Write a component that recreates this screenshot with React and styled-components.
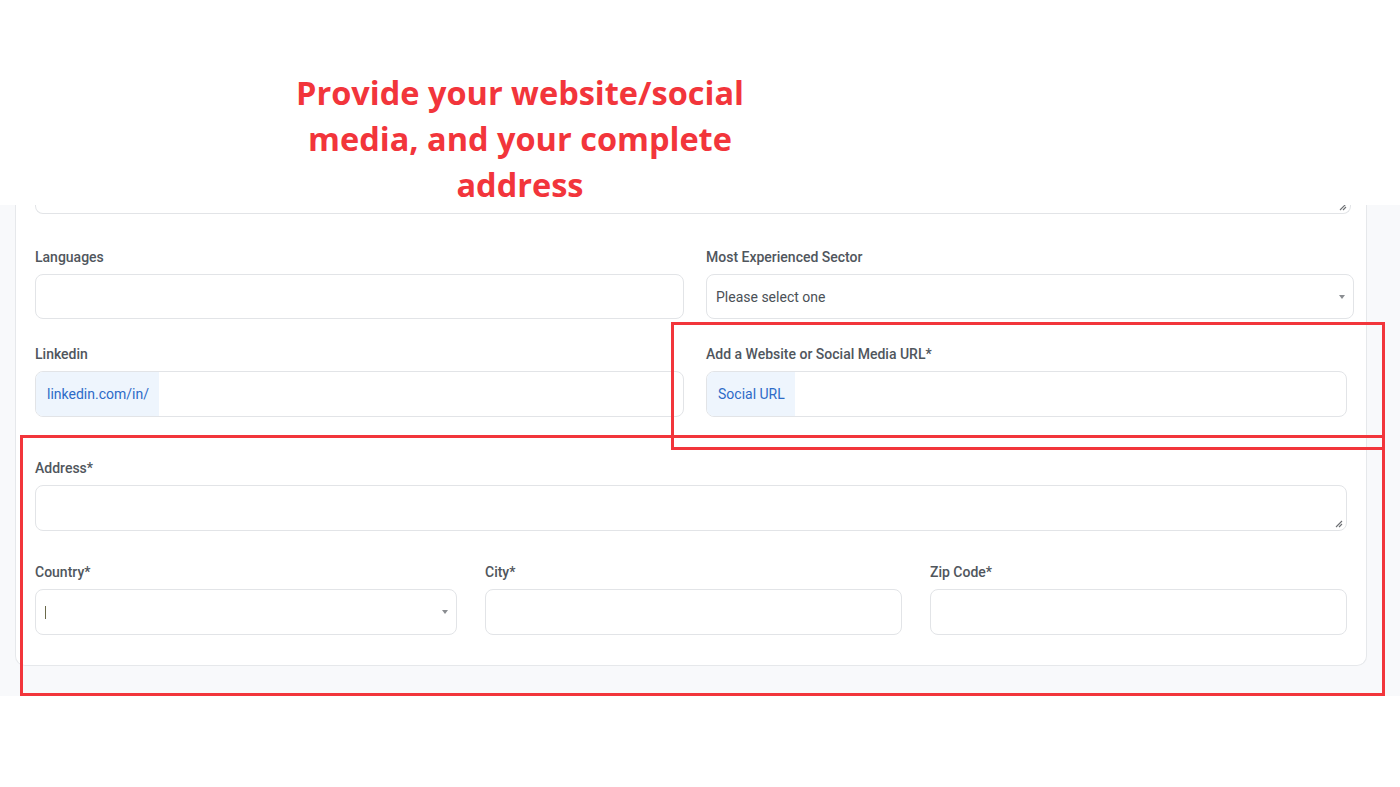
import React from "react";
import styled, { createGlobalStyle } from "styled-components";

const Global = createGlobalStyle`
  html, body { margin: 0; padding: 0; background: #ffffff; }
  body { font-family: Roboto, "Liberation Sans", Arial, sans-serif; }
  * { box-sizing: border-box; }
`;

const Page = styled.div`
  position: relative;
  width: 1400px;
  height: 787px;
  background: #ffffff;
  overflow: hidden;
`;

const Header = styled.header`
  height: 205px;
  display: flex;
  align-items: flex-start;
  padding: 70px 0 0 220px;
`;

const Title = styled.h1`
  margin: 0;
  width: 600px;
  text-align: center;
  font-family: "Open Sans", Lato, sans-serif;
  font-weight: 700;
  font-size: 32.5px;
  line-height: 46px;
  color: #f2353b;
  letter-spacing: 0;
`;

const Shot = styled.section`
  height: 491px;
  background: #f8f9fb;
  padding: 0 33px 0 15px;
  overflow: hidden;
`;

const Card = styled.div`
  background: #ffffff;
  border: 1px solid #e6e8eb;
  border-top: none;
  border-radius: 0 0 10px 10px;
  padding: 0 19px 30px 19px;
`;

const CutArea = styled.div`
  position: relative;
  height: 9px;
  margin-right: -4px;
  border: 1px solid #e2e4e7;
  border-top: none;
  border-radius: 0 0 8px 8px;
`;

const Grip = styled.svg`
  position: absolute;
  right: 3px;
  bottom: 2px;
`;

const Row = styled.div`
  display: grid;
  grid-template-columns: ${(p) => p.$cols};
  column-gap: ${(p) => p.$gap || "22px"};
  margin-top: ${(p) => p.$top};
  margin-right: ${(p) => p.$extend || "0"};
`;

const Field = styled.div`
  display: flex;
  flex-direction: column;
  min-width: 0;
`;

const Label = styled.label`
  font-size: 14px;
  font-weight: 500;
  color: #50565d;
  line-height: 17px;
  margin-bottom: 8px;
`;

const Box = styled.div`
  position: relative;
  display: flex;
  align-items: stretch;
  height: ${(p) => p.$h || "45px"};
  border: 1px solid #e2e4e7;
  border-radius: 8px;
  background: #ffffff;
  overflow: hidden;
`;

const Addon = styled.span`
  display: flex;
  align-items: center;
  padding: 0 10px 0 11px;
  background: #eef5fd;
  color: #2d6bc8;
  font-size: 14px;
  font-weight: 400;
`;

const Value = styled.span`
  display: flex;
  align-items: center;
  padding: 0 9px;
  font-size: 14px;
  color: #4b5157;
`;

const Caret = styled.span`
  align-self: center;
  margin-left: 9px;
  width: 1px;
  height: 13px;
  background: #6b6a4a;
`;

const Arrow = styled.span`
  position: absolute;
  right: 8px;
  top: 50%;
  margin-top: -2px;
  width: 0;
  height: 0;
  border-left: 3.5px solid transparent;
  border-right: 3.5px solid transparent;
  border-top: 4px solid #8a8d91;
`;

const Mark = styled.div`
  position: absolute;
  border: 3.5px solid #f2353b;
  pointer-events: none;
`;

const ResizeGrip = () => (
  <Grip width="8" height="8" viewBox="0 0 8 8">
    <path d="M7 1 L1 7 M7 4 L4 7" stroke="#6c6f73" strokeWidth="1.1" fill="none" />
  </Grip>
);

export default function App() {
  return (
    <Page>
      <Global />
      <Header>
        <Title>
          Provide your website/social
          <br />
          media, and your complete
          <br />
          address
        </Title>
      </Header>
      <Shot>
        <Card>
          <CutArea>
            <ResizeGrip />
          </CutArea>

          <Row $cols="649px 1fr" $top="35px" $extend="-7px">
            <Field>
              <Label>Languages</Label>
              <Box $h="45px" />
            </Field>
            <Field>
              <Label>Most Experienced Sector</Label>
              <Box $h="45px">
                <Value>Please select one</Value>
                <Arrow />
              </Box>
            </Field>
          </Row>

          <Row $cols="649px 1fr" $top="27px">
            <Field>
              <Label>Linkedin</Label>
              <Box $h="46px">
                <Addon>linkedin.com/in/</Addon>
              </Box>
            </Field>
            <Field>
              <Label>Add a Website or Social Media URL*</Label>
              <Box $h="46px">
                <Addon>Social URL</Addon>
              </Box>
            </Field>
          </Row>

          <Row $cols="1fr" $top="43px">
            <Field>
              <Label>Address*</Label>
              <Box $h="46px">
                <ResizeGrip />
              </Box>
            </Field>
          </Row>

          <Row $cols="422px 1fr 1fr" $gap="28px" $top="33px">
            <Field>
              <Label>Country*</Label>
              <Box $h="46px">
                <Caret />
                <Arrow />
              </Box>
            </Field>
            <Field>
              <Label>City*</Label>
              <Box $h="46px" />
            </Field>
            <Field>
              <Label>Zip Code*</Label>
              <Box $h="46px" />
            </Field>
          </Row>
        </Card>
      </Shot>

      <Mark style={{ left: 671, top: 322, width: 714, height: 128 }} />
      <Mark style={{ left: 20, top: 435, width: 1365, height: 261 }} />
    </Page>
  );
}
